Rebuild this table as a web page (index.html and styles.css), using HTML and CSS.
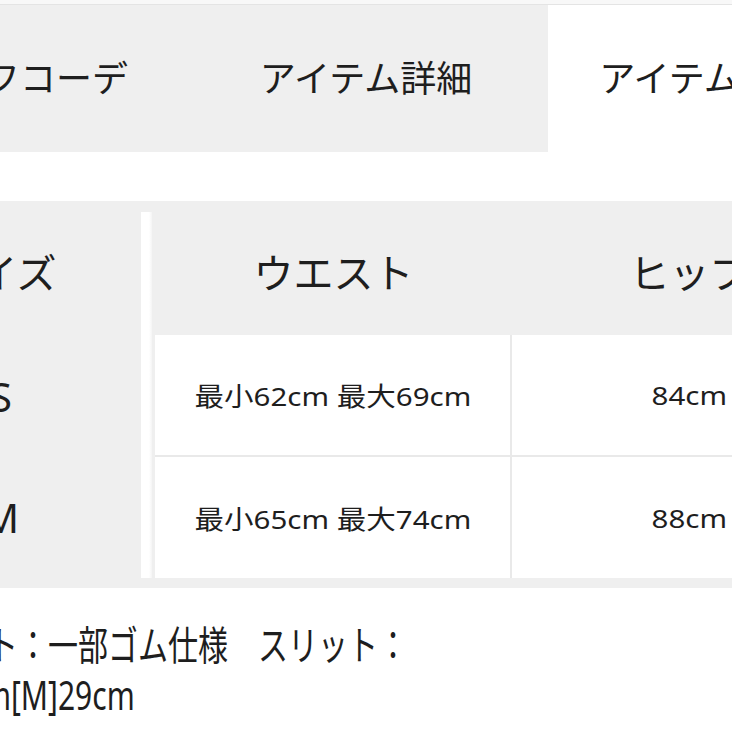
FILE: index.html
```html
<!DOCTYPE html>
<html lang="ja">
<head>
<meta charset="utf-8">
<title>アイテムサイズ</title>
<link rel="stylesheet" href="styles.css">
</head>
<body>
<div class="page">
  <div class="topline"></div>
  <nav class="tabs">
    <div class="tab">スタッフコーデ</div>
    <div class="tab">アイテム詳細</div>
    <div class="tab active">アイテムサイズ</div>
  </nav>
  <section class="size-table">
    <div class="cell size head">サイズ</div>
    <div class="strip"></div>
    <div class="cell head waist">ウエスト</div>
    <div class="cell head hip">ヒップ</div>

    <div class="cell size">S</div>
    <div class="cell data waist border-b"><span class="val">最小62cm 最大69cm</span></div>
    <div class="cell data hip border-b"><span class="val">84cm</span></div>

    <div class="cell size">M</div>
    <div class="cell data waist"><span class="val">最小65cm 最大74cm</span></div>
    <div class="cell data hip"><span class="val">88cm</span></div>
  </section>
  <div class="note">
    <div class="note-inner">
      <p class="note-line">ウエスト：一部ゴム仕様　スリット：</p>
      <p class="note-line">[S]28cm[M]29cm</p>
    </div>
  </div>
</div>
</body>
</html>
```
FILE: styles.css
```css
html, body {
  margin: 0;
  padding: 0;
  background: #ffffff;
}
body {
  width: 732px;
  height: 732px;
  overflow: hidden;
  font-family: "Noto Sans", "Noto Sans CJK JP", sans-serif;
  color: #1e1e1e;
}
.page {
  width: 732px;
  overflow: hidden;
}
.topline {
  height: 4px;
  background: #f8f8f8;
  border-bottom: 1px solid #e4e4e4;
}
.tabs {
  display: flex;
  margin-left: -180px;
  width: 1092px;
  height: 147px;
}
.tab {
  width: 364px;
  flex: none;
  display: flex;
  align-items: center;
  justify-content: center;
  background: #efefef;
  font-size: 36px;
  padding-bottom: 4px;
  box-sizing: border-box;
  white-space: nowrap;
}
.tab.active {
  background: #ffffff;
  padding-right: 14px;
}
.size-table {
  margin-top: 49px;
  margin-left: -139px;
  width: 1100px;
  background: #efefef;
  padding: 11px 0 10px;
  display: grid;
  grid-template-columns: 280px 11px 3px 357px 355px;
  grid-template-rows: 123px 122px 121px;
}
.cell {
  display: flex;
  align-items: center;
  justify-content: center;
  box-sizing: border-box;
  white-space: nowrap;
}
.size {
  grid-column: 1;
  font-size: 40px;
}
.strip {
  grid-column: 2;
  grid-row: 1 / 4;
  background: linear-gradient(to right, #ffffff 0, #ffffff 8px, #f4f4f4 11px);
}
.head {
  font-size: 40px;
  padding-bottom: 6px;
}
.head.size {
  padding-left: 0;
  padding-right: 8px;
}
.waist {
  grid-column: 4;
}
.hip {
  grid-column: 5;
}
.data {
  background: #ffffff;
  font-size: 26px;
}
.val {
  display: inline-block;
  transform: scaleX(1.135);
}
.data.waist {
  border-right: 2px solid #e9e9e9;
}
.border-b {
  border-bottom: 2px solid #e9e9e9;
}
.note {
  margin-top: 32px;
  height: 120px;
}
.note-inner {
  transform: scaleX(0.75);
  transform-origin: 0 0;
  margin-left: -102px;
  font-size: 40px;
  line-height: 50px;
  width: 1200px;
}
.note-line {
  margin: 0;
  white-space: nowrap;
}
```
